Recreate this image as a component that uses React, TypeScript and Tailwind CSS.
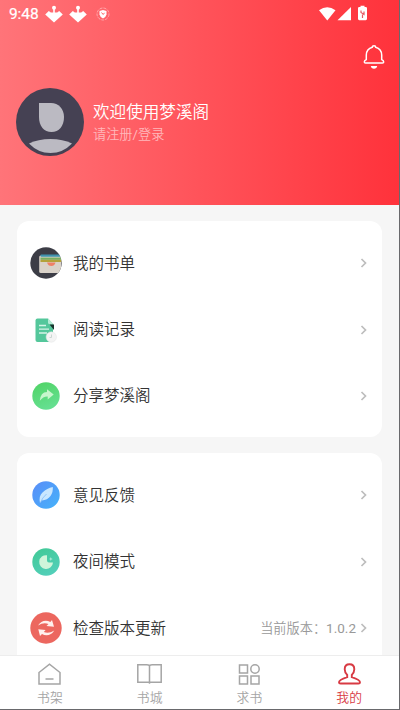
import type { ReactNode } from "react";

type Row = {
  label: string;
  icon: ReactNode;
  note?: ReactNode;
};

function Defs() {
  return (
    <svg className="absolute h-0 w-0">
      <defs>
        <linearGradient id="green" x1="0" y1="0" x2="0.4" y2="1">
          <stop offset="0" stopColor="#4fd364" />
          <stop offset="1" stopColor="#65df90" />
        </linearGradient>
        <linearGradient id="blue" x1="0" y1="0" x2="1" y2="1">
          <stop offset="0" stopColor="#5a8df8" />
          <stop offset="1" stopColor="#45b3fa" />
        </linearGradient>
        <linearGradient id="teal" x1="0" y1="0" x2="0.5" y2="1">
          <stop offset="0" stopColor="#40c994" />
          <stop offset="1" stopColor="#52cfb8" />
        </linearGradient>
        <clipPath id="round">
          <circle cx="16" cy="16" r="15.7" />
        </clipPath>
      </defs>
    </svg>
  );
}

function WalletIcon() {
  return (
    <svg viewBox="0 0 32 32" className="h-8 w-8">
      <circle cx="16" cy="16" r="15.7" fill="#3c3d46" />
      <g clipPath="url(#round)">
        <rect x="9.2" y="8.500" width="22" height="17.500" rx="1.500" fill="#d9d2c9" />
        <rect x="10.500" y="7.500" width="21" height="2.300" rx=".8" fill="#3f93ae" />
        <rect x="10.500" y="10.600" width="21" height="2.200" fill="#76ae62" />
        <rect x="10.500" y="12.800" width="21" height="2.200" fill="#b3a23a" />
        <path d="M17 15.500h8.500q-1 3.500-4.200 3.500T17 15.500z" fill="#ee8067" />
      </g>
    </svg>
  );
}

function RecordIcon() {
  return (
    <svg viewBox="0 0 32 32" className="h-8 w-8">
      <path d="M7.500 4.500H18l5 5.500v18H7.500q-2 0-2-2V6.500q0-2 2-2z" fill="#54c79b" />
      <path d="M18 4.500v4q0 2 2 2h4z" fill="#b5ead5" />
      <path d="M19.500 10.500H24v5.500z" fill="#18332c" />
      <path d="M9 11.500h7M9 15.200h10M9 19h8" stroke="#d5f4e8" strokeWidth="1.300" />
      <circle cx="21.300" cy="23" r="5.200" fill="#f4f4f4" stroke="#e2e5e4" strokeWidth=".5" />
      <path d="M21.500 20.500v3h-2" fill="none" stroke="#cbd6d2" strokeWidth="1" />
    </svg>
  );
}

function ShareIcon() {
  return (
    <svg viewBox="0 0 32 32" className="h-8 w-8">
      <circle cx="16" cy="16" r="13.700" fill="url(#green)" />
      <path d="M9.800 20.800q.7-8.600 7.200-8.800V9.300l6.700 5.200-6 5v-3q-4.500-.2-7.900 4.300z" fill="#c7f6cd" />
    </svg>
  );
}

function FeatherIcon() {
  return (
    <svg viewBox="0 0 32 32" className="h-8 w-8">
      <circle cx="16" cy="16" r="13.700" fill="url(#blue)" />
      <path d="M10 24q-1.500-7 2.500-10.500Q17 9 22.800 8q.5 5-2.300 9-3 4.200-8.700 4.500z" fill="#c9e7ff" />
      <path d="M10.500 23.500q1.500-4.500 6-8.500" fill="none" stroke="#7ab8f8" strokeWidth=".7" />
    </svg>
  );
}

function NightIcon() {
  return (
    <svg viewBox="0 0 32 32" className="h-8 w-8">
      <circle cx="16" cy="16" r="13.700" fill="url(#teal)" />
      <path d="M17 9.200v5.300q0 2 2 2h4A6.900 6.900 0 1 1 17 9.200z" fill="#cff5da" />
      <path d="M20.800 11l.5 1.500 1.500.5-1.500.5-.5 1.500-.5-1.500-1.500-.5 1.500-.5z" fill="#b7eedb" />
    </svg>
  );
}

function UpdateIcon() {
  return (
    <svg viewBox="0 0 32 32" className="h-8 w-8">
      <circle cx="16" cy="16" r="15.700" fill="#ec675f" />
      <path d="M8 13.500q3-4.800 7.800-4.800 2.400 0 4.500 1.400L22 8l2 6.800-7.500-.8 2-2q-5-2-10.500 1.500z" fill="#fff0ed" />
      <path d="M24.300 18.500q-3 4.800-7.800 4.800-2.400 0-4.500-1.400L10 24l-1.700-6.800 7.300.8-1.800 2q5 2 10.500-1.500z" fill="#fff0ed" />
    </svg>
  );
}

const library: Row[] = [
  { label: "我的书单", icon: <WalletIcon /> },
  { label: "阅读记录", icon: <RecordIcon /> },
  { label: "分享梦溪阁", icon: <ShareIcon /> },
];

const settings: Row[] = [
  { label: "意见反馈", icon: <FeatherIcon /> },
  { label: "夜间模式", icon: <NightIcon /> },
  {
    label: "检查版本更新",
    icon: <UpdateIcon />,
    note: (
      <>
        当前版本：<span className="font-['Roboto',sans-serif] text-[13.5px] font-normal">1.0.2</span>
      </>
    ),
  },
];

const tabs = [
  {
    label: "书架",
    icon: <path d="M2 9.500 12.500 1.200 23 9.500V21H2zM8.500 16h8" />,
  },
  {
    label: "书城",
    icon: <path d="M.8 1.700h9q2.700 0 2.700 1.500 0-1.500 2.700-1.500h9v17.500H.8zM12.500 3.200v17.500" />,
  },
  {
    label: "求书",
    icon: (
      <>
        <path d="M2.500 2h8v8h-8zM2.500 13h8v8h-8zM14 13h8v8h-8z" />
        <circle cx="18" cy="6" r="4.200" />
      </>
    ),
  },
  {
    label: "我的",
    active: true,
    icon: (
      <path
        d="M12.500 1.200c-3 0-4.800 2-4.800 5 0 2.500 1 4.200 2.500 5.700v2.300C5.500 15.700 2 17 2 19.200c0 .8.500 1.300 1.500 1.300h18c1 0 1.500-.5 1.500-1.300 0-2.200-3.500-3.500-8.200-5v-2.300c1.500-1.500 2.500-3.200 2.500-5.700 0-3-1.800-5-4.800-5z"
        strokeWidth="1.900"
      />
    ),
  },
];

function Notice() {
  return (
    <svg viewBox="0 0 18 20" className="h-5 w-[18px]" fill="#fff">
      <circle cx="9" cy="3.800" r="2" />
      <path d="M8.200 5h1.600v3.500h2.400l2-1.500 3.600 3.600L9 18.500.2 10.600 3.800 7l2 1.500h2.400z" />
    </svg>
  );
}

function StatusBar() {
  return (
    <div className="flex h-[27px] items-center pt-px pl-[9px]">
      <span className="w-[36px] font-['Roboto',sans-serif] text-[15.5px] leading-5 tracking-[-0.1px] [-webkit-text-stroke:0.2px_white]">
        9:48
      </span>
      <span className="flex gap-[6px]">
        <Notice />
        <Notice />
      </span>
      <svg viewBox="0 0 14 14" className="ml-[9px] h-[14px] w-[14px]">
        <circle cx="7" cy="7" r="6" fill="none" stroke="#ffc0c4" strokeWidth=".7" strokeDasharray="3 1" />
        <path d="M3.500 4 7 3l3.500 1v3.500q-.5 2.500-3.500 4-3-1.500-3.500-4z" fill="#fff" />
        <path d="m5.500 5.500 1.700 2 1.300-1.700" fill="none" stroke="#fc686d" />
      </svg>
      <svg viewBox="0 0 52 18" className="ml-auto mr-[29px] h-[18px] w-[52px]" fill="#fff">
        <path d="M1 5.200q8.200-6 16.500 0L9.300 15.500z" />
        <path d="M33 2v13.200H19.500z" />
        <path d="M42.500 2V.8h4V2h1.200q1.300 0 1.300 1.300v10.500q0 1.400-1.300 1.400h-6.400q-1.300 0-1.300-1.400V3.300Q40 2 41.300 2z" />
        <path d="M43 5.500v2l3 2v-3M44.500 9.500V13" fill="none" stroke="#e65b64" strokeWidth="1.200" />
      </svg>
    </div>
  );
}

function Header() {
  return (
    <header className="h-[205px] shrink-0 bg-linear-[90deg,#ff7479,#ff323b] text-white">
      <StatusBar />
      <div className="flex h-[60px] justify-end pt-[17px] pr-[14px]">
        <svg viewBox="0 0 22 28" className="h-7 w-[22px]" fill="none" stroke="#fff" strokeWidth="1.500">
          <path
            d="M9.300 3.200q0-1.400 1.700-1.400t1.700 1.400q5.800 1.500 6 7.800v4.500q2 1 2 2.500 0 1-1.200 1h-17q-1.200 0-1.200-1 0-1.500 2-2.500V11q.2-6.300 6-7.800z"
          />
          <path d="M7.800 22h6.400q-.5 2.800-3.200 2.800T7.800 22z" fill="#fff" stroke="none" />
        </svg>
      </div>
      <div className="flex pt-px pl-4">
        <svg viewBox="0 0 68 68" className="h-[68px] w-[68px]">
          <circle cx="34" cy="34" r="34" fill="#454153" />
          <path d="M23 15h12C42.500 15 48 21 48 29c0 9-5 15-12.500 15S23 38 23 29z" fill="#bbbac2" />
          <path d="M13 55.500q9-4.500 21.500-4.500T56 55.500Q47 65 34.500 65T13 55.500z" fill="#bbbac2" />
        </svg>
        <div className="ml-[9px] pt-[11px]">
          <h1 className="text-[16.6px] leading-6 font-[350]">欢迎使用梦溪阁</h1>
          <p className="text-[13.2px] leading-[22px] font-[350] text-[#ffb8bb]">
            请注册<span className="font-['Roboto',sans-serif] font-normal">/</span>登录
          </p>
        </div>
      </div>
    </header>
  );
}

function Chevron() {
  return (
    <svg viewBox="0 0 8 10" className="h-[10px] w-2" fill="none" stroke="#bdbdbd" strokeWidth="1.700">
      <path d="m1.500 1 4 4-4 4" />
    </svg>
  );
}

function MenuCard({ rows }: { rows: Row[] }) {
  return (
    <section className="mx-auto w-[365px] shrink-0 rounded-[12px] bg-white pt-[9px] pb-2">
      {rows.map((row) => (
        <div key={row.label} className="flex h-[66.4px] items-center pr-[14px] pl-[13px]">
          {row.icon}
          <span className="ml-[11px] pb-[2px] text-[15.5px] font-[350] text-[#333]">{row.label}</span>
          <span className="mr-1 ml-auto pb-px text-[13.2px] font-[350] text-[#999]">{row.note}</span>
          <Chevron />
        </div>
      ))}
    </section>
  );
}

function TabBar() {
  return (
    <nav className="grid h-[54px] shrink-0 grid-cols-4 border-t border-[#ededed] bg-white">
      {tabs.map((tab) => (
        <div
          key={tab.label}
          className={
            tab.active
              ? "flex flex-col items-center pt-[7px] text-[#d83a43]"
              : "flex flex-col items-center pt-[7px] text-[#a5a5a5]"
          }
        >
          <svg viewBox="0 0 25 24" className="h-6 w-[25px]" fill="none" stroke="currentColor" strokeWidth="1.500">
            {tab.icon}
          </svg>
          <span className="text-[12.8px] leading-[20px] font-[350]">{tab.label}</span>
        </div>
      ))}
    </nav>
  );
}

export default function App() {
  return (
    <div className="h-[710px] w-[400px] overflow-hidden border-r border-b border-[#69696c] bg-[#f6f6f6] font-['Noto_Sans_CJK_SC',sans-serif]">
      <Defs />
      <div className="flex h-full flex-col">
        <Header />
        <main className="flex min-h-0 flex-1 flex-col gap-4 overflow-hidden pt-4">
          <MenuCard rows={library} />
          <MenuCard rows={settings} />
        </main>
        <TabBar />
      </div>
    </div>
  );
}
